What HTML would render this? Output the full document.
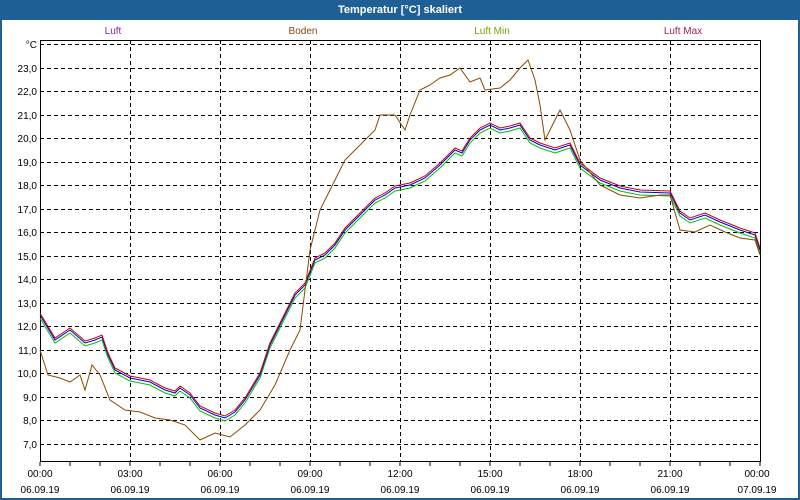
<!DOCTYPE html>
<html><head><meta charset="utf-8"><style>
html,body{margin:0;padding:0;width:800px;height:500px;overflow:hidden;background:#1e5f96;font-family:"Liberation Sans",sans-serif}
</style></head><body>
<svg width="800" height="500" xmlns="http://www.w3.org/2000/svg" font-family="Liberation Sans, sans-serif" font-size="10">
<rect x="0" y="0" width="800" height="500" fill="#1e5f96"/>
<rect x="2" y="20" width="796" height="478" fill="#fff"/>
<text x="400" y="13" fill="#fff" font-weight="bold" font-size="11" text-anchor="middle">Temperatur [°C] skaliert</text>
<text x="113" y="34" fill="#7a2a9a" text-anchor="middle">Luft</text>
<text x="303" y="34" fill="#8b4513" text-anchor="middle">Boden</text>
<text x="492" y="34" fill="#7aa000" text-anchor="middle">Luft Min</text>
<text x="683" y="34" fill="#a0205a" text-anchor="middle">Luft Max</text>
<g stroke="#000" stroke-dasharray="4,3" stroke-width="1">
<line x1="40" y1="44.5" x2="760" y2="44.5"/>
<line x1="40" y1="68.5" x2="760" y2="68.5"/><line x1="40" y1="91.5" x2="760" y2="91.5"/><line x1="40" y1="115.5" x2="760" y2="115.5"/><line x1="40" y1="138.5" x2="760" y2="138.5"/><line x1="40" y1="162.5" x2="760" y2="162.5"/><line x1="40" y1="185.5" x2="760" y2="185.5"/><line x1="40" y1="209.5" x2="760" y2="209.5"/><line x1="40" y1="232.5" x2="760" y2="232.5"/><line x1="40" y1="256.5" x2="760" y2="256.5"/><line x1="40" y1="279.5" x2="760" y2="279.5"/><line x1="40" y1="303.5" x2="760" y2="303.5"/><line x1="40" y1="326.5" x2="760" y2="326.5"/><line x1="40" y1="350.5" x2="760" y2="350.5"/><line x1="40" y1="373.5" x2="760" y2="373.5"/><line x1="40" y1="397.5" x2="760" y2="397.5"/><line x1="40" y1="420.5" x2="760" y2="420.5"/><line x1="40" y1="444.5" x2="760" y2="444.5"/>
<line x1="130.5" y1="40" x2="130.5" y2="462"/><line x1="220.5" y1="40" x2="220.5" y2="462"/><line x1="310.5" y1="40" x2="310.5" y2="462"/><line x1="400.5" y1="40" x2="400.5" y2="462"/><line x1="490.5" y1="40" x2="490.5" y2="462"/><line x1="580.5" y1="40" x2="580.5" y2="462"/><line x1="670.5" y1="40" x2="670.5" y2="462"/>
</g>
<rect x="40.5" y="40.5" width="720" height="421" fill="none" stroke="#000"/>
<g stroke="#000"><path d="M70 462v4M100 462v4M130 462v4M160 462v4M190 462v4M220 462v4M250 462v4M280 462v4M310 462v4M340 462v4M370 462v4M400 462v4M430 462v4M460 462v4M490 462v4M520 462v4M550 462v4M580 462v4M610 462v4M640 462v4M670 462v4M700 462v4M730 462v4M760 462v4M40 462v4"/></g>
<g text-anchor="end" fill="#000">
<text x="37" y="48">°C</text><text x="37" y="72">23,0</text><text x="37" y="95">22,0</text><text x="37" y="119">21,0</text><text x="37" y="142">20,0</text><text x="37" y="166">19,0</text><text x="37" y="189">18,0</text><text x="37" y="213">17,0</text><text x="37" y="236">16,0</text><text x="37" y="260">15,0</text><text x="37" y="283">14,0</text><text x="37" y="307">13,0</text><text x="37" y="330">12,0</text><text x="37" y="354">11,0</text><text x="37" y="377">10,0</text><text x="37" y="401">9,0</text><text x="37" y="424">8,0</text><text x="37" y="448">7,0</text>
</g>
<g text-anchor="middle" fill="#000">
<text x="40" y="477">00:00</text><text x="40" y="493">06.09.19</text>
<text x="130" y="477">03:00</text><text x="130" y="493">06.09.19</text>
<text x="220" y="477">06:00</text><text x="220" y="493">06.09.19</text>
<text x="310" y="477">09:00</text><text x="310" y="493">06.09.19</text>
<text x="400" y="477">12:00</text><text x="400" y="493">06.09.19</text>
<text x="490" y="477">15:00</text><text x="490" y="493">06.09.19</text>
<text x="580" y="477">18:00</text><text x="580" y="493">06.09.19</text>
<text x="670" y="477">21:00</text><text x="670" y="493">06.09.19</text>
<text x="757" y="477">00:00</text><text x="757" y="493">07.09.19</text>
</g>
<defs><polyline id="air" fill="none" points="40,315 55,340 70,330 85,343 95,340 102,337 108,355 115,370 130,378 150,382 165,390 175,393 180,388 190,395 200,408 215,415 225,418 235,412 245,400 260,375 270,345 280,325 295,295 305,285 315,260 325,255 335,245 345,230 360,215 375,200 385,195 395,188 410,185 425,178 440,165 455,150 462,153 470,140 480,130 490,125 500,130 510,128 520,125 530,140 540,145 555,150 570,145 580,165 600,180 620,188 640,192 670,193 680,213 690,220 705,215 720,222 740,230 755,235 760,250"/></defs>
<use href="#air" stroke="#00c000" transform="translate(0,3)"/>
<use href="#air" stroke="#0000e0"/>
<use href="#air" stroke="#d00000" transform="translate(0,-2)"/>
<polyline fill="none" stroke="#8b4a00" points="40,350 48,375 60,378 70,382 80,375 85,390 92,365 100,375 110,400 125,410 140,412 155,418 170,420 185,425 200,440 215,433 230,437 245,425 260,410 275,385 290,350 300,330 310,250 320,210 330,190 345,160 355,150 365,140 375,130 380,115 395,115 405,130 410,115 420,90 430,85 440,78 450,75 460,68 470,82 480,78 485,90 500,88 510,80 520,68 528,60 535,80 540,105 545,140 555,120 560,110 570,130 580,160 600,185 620,195 640,198 660,195 670,195 680,230 695,232 710,225 725,232 740,238 755,240 760,255"/>
</svg>
</body></html>
